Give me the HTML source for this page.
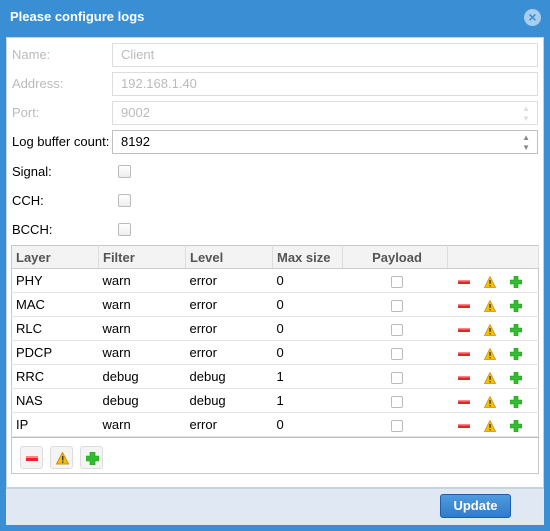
<!DOCTYPE html><html><head><style>
*{box-sizing:border-box;margin:0;padding:0}
body{width:550px;height:531px;background:#3a8fd4;font-family:"Liberation Sans",sans-serif;font-size:13px;position:relative;overflow:hidden}
.title{position:absolute;left:10px;top:9px;color:#fff;font-weight:bold;font-size:13px}
.close{position:absolute;left:524px;top:9px;width:17px;height:17px;border-radius:50%;background:#a9cdee;color:#3a8fd4;font-size:14px;font-weight:bold;text-align:center;line-height:17px}
.main{position:absolute;left:6px;top:37px;width:538px;height:451px;background:#fff;border:1px solid #c5d2e0}
.foot{position:absolute;left:6px;top:488px;width:538px;height:37px;background:#dfe8f3;border-top:1px solid #c5d2e0}
.lbl{position:absolute;left:12px;color:#000}
.dis{color:#bbb}
.inp{position:absolute;left:112px;width:426px;height:24px;border:1px solid #ddd;padding:0 0 0 8px;line-height:22px}
.inp.act{border-color:#c0c0c0}
.cb{position:absolute;left:118px;width:13px;height:13px;border:1px solid #bbb;border-radius:2px;background:linear-gradient(#fff,#eee)}
table{position:absolute;left:11px;top:245px;width:528px;border-collapse:collapse;border:1px solid #c8c8c8}
th{height:23px;background:#f3f3f3;color:#555;text-align:left;font-weight:bold;padding-left:4px;border-right:1px solid #ddd;border-bottom:1px solid #ccc}
td{height:24px;padding-left:4px;border-bottom:1px solid #e4e4e4}
.tb{position:absolute;left:11px;top:437px;width:528px;height:37px;border:1px solid #c8c8c8;border-top:1px solid #bbb}
.btn{position:absolute;top:8px;width:23px;height:23px;border:1px solid #ddd;border-radius:3px;background:#f4f4f4}
.btn svg{position:absolute;left:5px;top:5px}
.up{position:absolute;left:440px;top:494px;width:71px;height:24px;border:1px solid #1f5fa8;border-radius:3px;background:linear-gradient(#4f9be0,#2f7cc8);color:#fff;font-weight:bold;text-align:center;line-height:22px}
.ic{vertical-align:middle}
</style></head><body>
<div class="title">Please configure logs</div>
<div class="close">×</div>
<div class="main"></div>
<div class="foot"></div>
<div class="lbl dis" style="top:47px">Name:</div><div class="inp dis" style="top:43px">Client</div>
<div class="lbl dis" style="top:76px">Address:</div><div class="inp dis" style="top:72px">192.168.1.40</div>
<div class="lbl dis" style="top:105px">Port:</div><div class="inp dis" style="top:101px">9002<span style="position:absolute;right:7px;top:0;font-size:8px;line-height:10px;color:#ddd;padding-top:2px">▲<br>▼</span></div>
<div class="lbl" style="top:134px">Log buffer count:</div><div class="inp act" style="top:130px">8192<span style="position:absolute;right:7px;top:0;font-size:8px;line-height:10px;color:#888;padding-top:2px">▲<br>▼</span></div>
<div class="lbl" style="top:164px">Signal:</div><div class="cb" style="top:165px"></div>
<div class="lbl" style="top:193px">CCH:</div><div class="cb" style="top:194px"></div>
<div class="lbl" style="top:222px">BCCH:</div><div class="cb" style="top:223px"></div>
<table>
<tr><th style="width:87px">Layer</th><th style="width:87px">Filter</th><th style="width:87px">Level</th><th style="width:70px">Max size</th><th style="width:105px;text-align:center">Payload</th><th></th></tr>
<tbody id="b"></tbody>
</table>
<div class="tb">
<div class="btn" style="left:8px"><svg width="13" height="13"><rect x="0" y="4" width="12" height="5" fill="#e22"/><rect x="0" y="4" width="12" height="2" fill="#f88"/></svg></div>
<div class="btn" style="left:38px"><svg width="13" height="13"><path d="M6.5 0.5L12.5 12H0.5Z" fill="#f5c000" stroke="#d09000"/><rect x="6" y="4" width="1.4" height="4.5" fill="#333"/><rect x="6" y="9.5" width="1.4" height="1.4" fill="#333"/></svg></div>
<div class="btn" style="left:68px"><svg width="13" height="13"><path d="M4 0H9V4H13V9H9V13H4V9H0V4H4Z" fill="#3b3" stroke="#290" stroke-width=".6"/></svg></div>
</div>
<div class="up">Update</div>
<script>
var M='<svg class="ic" width="12" height="12"><rect x="0" y="4" width="12" height="4" fill="#e22"/><rect x="0" y="4" width="12" height="1.5" fill="#f88"/></svg>';
var W='<svg class="ic" width="12" height="12"><path d="M6 0.5L11.5 11.5H0.5Z" fill="#f5c000" stroke="#d09000" stroke-width=".8"/><rect x="5.4" y="4" width="1.3" height="4" fill="#333"/><rect x="5.4" y="9" width="1.3" height="1.3" fill="#333"/></svg>';
var P='<svg class="ic" width="12" height="12"><path d="M4 0H8V4H12V8H8V12H4V8H0V4H4Z" fill="#3b3" stroke="#290" stroke-width=".6"/></svg>';
var d=[["PHY","warn","error","0"],["MAC","warn","error","0"],["RLC","warn","error","0"],["PDCP","warn","error","0"],["RRC","debug","debug","1"],["NAS","debug","debug","1"],["IP","warn","error","0"]],h="";
d.forEach(function(r){h+="<tr><td>"+r[0]+"</td><td>"+r[1]+"</td><td>"+r[2]+"</td><td>"+r[3]+'</td><td style="text-align:center"><span style="display:inline-block;width:12px;height:12px;border:1px solid #bbb;border-radius:2px;vertical-align:middle"></span></td><td style="padding-left:10px">'+M+'<span style="display:inline-block;width:14px"></span>'+W+'<span style="display:inline-block;width:14px"></span>'+P+'</td></tr>'});
document.getElementById("b").innerHTML=h;
</script>
</body></html>
